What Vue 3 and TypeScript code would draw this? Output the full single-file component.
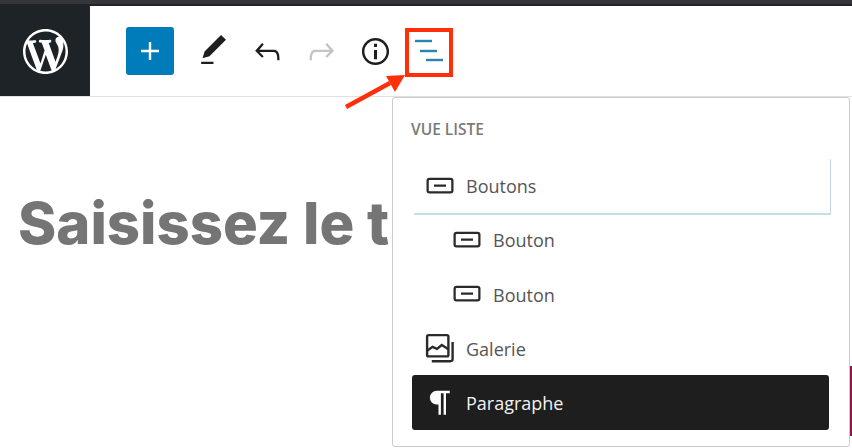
<template>
  <div class="page">
    <div class="admin-bar"></div>
    <header class="editor-header">
      <div class="logo">
        <svg viewBox="0 0 20 20" width="45" height="45" fill="currentColor">
          <path d="M20 10c0-5.51-4.49-10-10-10C4.48 0 0 4.49 0 10c0 5.52 4.48 10 10 10 5.51 0 10-4.48 10-10zM7.78 15.37L4.37 6.22c.55-.02 1.17-.08 1.17-.08.5-.06.44-1.13-.06-1.11 0 0-1.45.11-2.37.11-.18 0-.37 0-.58-.01C4.12 2.69 6.87 1.11 10 1.11c2.33 0 4.45.87 6.05 2.34-.68-.11-1.65.39-1.65 1.58 0 .74.45 1.36.9 2.1.35.61.55 1.36.55 2.46 0 1.49-1.4 5-1.4 5l-3.03-8.37c.54-.02.82-.17.82-.17.5-.05.44-1.25-.06-1.22 0 0-1.44.12-2.38.12-.87 0-2.33-.12-2.33-.12-.5-.03-.56 1.2-.06 1.22l.92.08 1.26 3.41zM17.41 10c.24-.64.74-1.87.43-4.25.7 1.29 1.05 2.71 1.05 4.25 0 3.29-1.73 6.24-4.4 7.78.97-2.59 1.94-5.2 2.92-7.78zM6.1 18.09C3.12 16.65 1.11 13.53 1.11 10c0-1.3.23-2.48.72-3.59C3.25 10.3 4.67 14.2 6.1 18.09zm4.03-6.63l2.58 6.98c-.86.29-1.76.45-2.71.45-.79 0-1.57-.11-2.29-.33.81-2.38 1.62-4.74 2.42-7.1z" />
        </svg>
      </div>
      <div class="toolbar">
        <button class="add">
          <svg viewBox="0 0 24 24" width="36" height="36" fill="#fff">
            <path d="M18 11.2h-5.2V6h-1.6v5.2H6v1.6h5.2V18h1.6v-5.2H18z" />
          </svg>
        </button>
        <button v-for="tool in tools" :key="tool.name" :class="['tool', tool.name]">
          <svg viewBox="0 0 24 24" width="37" height="37" fill="currentColor">
            <path :d="tool.d" />
          </svg>
        </button>
        <button class="tool list-toggle">
          <span class="highlight">
            <svg viewBox="0 0 48 49" width="48" height="49" fill="#2a83b1">
              <rect x="10" y="11.8" width="17" height="2.4" />
              <rect x="15" y="21.8" width="17" height="2.4" />
              <rect x="21" y="30.8" width="17" height="2.4" />
            </svg>
          </span>
        </button>
      </div>
    </header>

    <h1 class="title">Saisissez le t</h1>

    <div class="side-mark"></div>

    <svg class="arrow" viewBox="0 0 70 40" width="70" height="40">
      <path d="M6 37L50 13" stroke="#ff2f0a" stroke-width="4.5" fill="none" />
      <path d="M65 5L46 6L55 22z" fill="#ff2f0a" />
    </svg>

    <section class="popover">
      <h2 class="popover-title">VUE LISTE</h2>
      <ul class="block-list">
        <li
          v-for="block in blocks"
          :key="block.id"
          :class="['block-row', { nested: block.nested, selected: block.selected, dropping: block.dropping }]"
        >
          <svg v-if="block.icon === 'button'" viewBox="0 0 24 24" width="36" height="36" fill="currentColor">
            <path d="M8 12.5h8V11H8v1.5zM19 6.5H5a2 2 0 0 0-2 2V15a2 2 0 0 0 2 2h14a2 2 0 0 0 2-2V8.5a2 2 0 0 0-2-2zM19.5 15a.5.5 0 0 1-.5.5H5a.5.5 0 0 1-.5-.5V8.5A.5.5 0 0 1 5 8h14a.5.5 0 0 1 .5.5V15z" />
          </svg>
          <svg v-else-if="block.icon === 'gallery'" viewBox="0 0 24 24" width="36" height="36" fill="none" stroke="currentColor" stroke-width="1.6">
            <rect x="3.4" y="3.4" width="14.2" height="14.2" rx="1" />
            <path d="M3.4 13.8l3.6-2.6 3 1.4 3.2-2.6 4.4 2.8" />
            <path d="M20.4 8v11.4c0 .9-.5 1.4-1.4 1.4H6.5" />
          </svg>
          <svg v-else viewBox="0 0 24 24" width="36" height="36" fill="currentColor">
            <path d="M18.5 4.5H9.8a4.6 4.6 0 0 0-.4 9.18H11V20.5h1.6V6.2h1.8v14.3H16V6.2h2.5z" />
          </svg>
          <span class="block-name">{{ block.label }}</span>
        </li>
      </ul>
    </section>
  </div>
</template>

<script setup lang="ts">
const tools = [
  { name: 'edit', d: 'M20.1 5.1L16.9 2 6.2 12.7l-1.3 4.4 4.5-1.3L20.1 5.1zM4 20.8h8v-1.5H4v1.5z' },
  { name: 'undo', d: 'M18.3 11.7c-.6-.6-1.4-.9-2.3-.9H6.7l2.9-3.3-1.1-1-4.5 5L8.5 16l1-1-2.7-2.7H16c.5 0 .9.2 1.3.5 1 1 1 3.4 1 4.5v.3h1.5v-.2c0-1.5 0-4.3-1.5-5.7z' },
  { name: 'redo', d: 'M15.6 6.5l-1.1 1 2.9 3.3H8c-.9 0-1.7.3-2.3.9-1.4 1.5-1.4 4.2-1.4 5.7v.2h1.5v-.3c0-1.1 0-3.5 1-4.5.3-.3.7-.5 1.3-.5h9.2L14.5 15l1.1 1.1 4.6-4.6-4.6-5z' },
  { name: 'info', d: 'M12 3.2c-4.8 0-8.8 3.9-8.8 8.8 0 4.8 3.9 8.8 8.8 8.8 4.8 0 8.8-3.9 8.8-8.8 0-4.8-4-8.8-8.8-8.8zm0 16c-4 0-7.2-3.3-7.2-7.2C4.8 8 8 4.8 12 4.8s7.2 3.3 7.2 7.2c0 4-3.2 7.2-7.2 7.2zM11 17h2v-6h-2v6zm0-8h2V7h-2v2z' },
]

const blocks = [
  { id: 1, label: 'Boutons', icon: 'button', dropping: true },
  { id: 2, label: 'Bouton', icon: 'button', nested: true },
  { id: 3, label: 'Bouton', icon: 'button', nested: true },
  { id: 4, label: 'Galerie', icon: 'gallery' },
  { id: 5, label: 'Paragraphe', icon: 'paragraph', selected: true },
]
</script>

<style scoped>
.page {
  position: relative;
  width: 852px;
  height: 448px;
  overflow: hidden;
  background: #fff;
  font-family: "Open Sans", "Liberation Sans", sans-serif;
}

.admin-bar {
  box-sizing: border-box;
  height: 6px;
  border-bottom: 2px solid #212326;
  background: #34363a;
}

.editor-header {
  display: flex;
  height: 90px;
  border-bottom: 1px solid #e0e0e0;
}

.logo {
  display: flex;
  align-items: center;
  justify-content: center;
  width: 90px;
  background: #1e2327;
  color: #fff;
}

.toolbar {
  display: flex;
  align-items: center;
  padding-left: 36px;
}

.toolbar button {
  display: flex;
  align-items: center;
  justify-content: center;
  padding: 0;
  border: 0;
  background: none;
}

.toolbar .add {
  width: 48px;
  height: 48px;
  margin-right: 12px;
  border-radius: 3px;
  background: #007cba;
}

.toolbar .tool {
  width: 54px;
  height: 49px;
  color: #1e1e1e;
}

.toolbar .edit {
  margin-bottom: 1px;
}

.toolbar .redo {
  color: #c4c4c4;
}

.toolbar .list-toggle {
  margin-top: 2px;
}

.highlight {
  display: block;
  width: 48px;
  height: 49px;
  outline: 4px solid #ff2f0a;
  outline-offset: -4px;
}

.highlight svg {
  display: block;
}

.title {
  width: 374px;
  margin: 96px 0 0 18px;
  overflow: hidden;
  font-family: Inter, "Liberation Sans", sans-serif;
  font-size: 58px;
  font-weight: 800;
  line-height: 60px;
  white-space: nowrap;
  color: #757575;
}

.side-mark {
  position: absolute;
  top: 366px;
  right: 0;
  width: 3px;
  height: 70px;
  background: #8e1545;
}

.arrow {
  position: absolute;
  top: 70px;
  left: 340px;
  z-index: 2;
}

.popover {
  position: absolute;
  top: 97px;
  left: 392px;
  box-sizing: border-box;
  width: 458px;
  height: 350px;
  border: 1px solid #ccc;
  border-radius: 3px;
  background: #fff;
}

.popover-title {
  margin: 0;
  padding: 22px 0 0 18px;
  font-size: 15.5px;
  font-weight: 600;
  line-height: 18px;
  color: #7a7a7a;
}

.block-list {
  margin: 20.6px 0 0 19px;
  padding: 0;
  width: 417px;
  list-style: none;
}

.block-row {
  position: relative;
  display: flex;
  align-items: center;
  gap: 8px;
  height: 54.2px;
  padding-left: 10px;
  border-radius: 3px;
  color: #2a2a2a;
}

.block-row.nested {
  padding-left: 37px;
}

.block-row.dropping::after {
  content: "";
  position: absolute;
  top: 0;
  right: -2px;
  bottom: -2px;
  left: 2px;
  border-right: 1px solid #c3d9e6;
  border-bottom: 2px solid #c9dde9;
}

.block-row.selected {
  background: #1e1e1e;
  color: #fff;
}

.block-name {
  padding-top: 1px;
  font-size: 18px;
  color: #555;
}

.block-row.selected .block-name {
  color: #f2f2f2;
}
</style>

<style>
body {
  margin: 0;
}
</style>
